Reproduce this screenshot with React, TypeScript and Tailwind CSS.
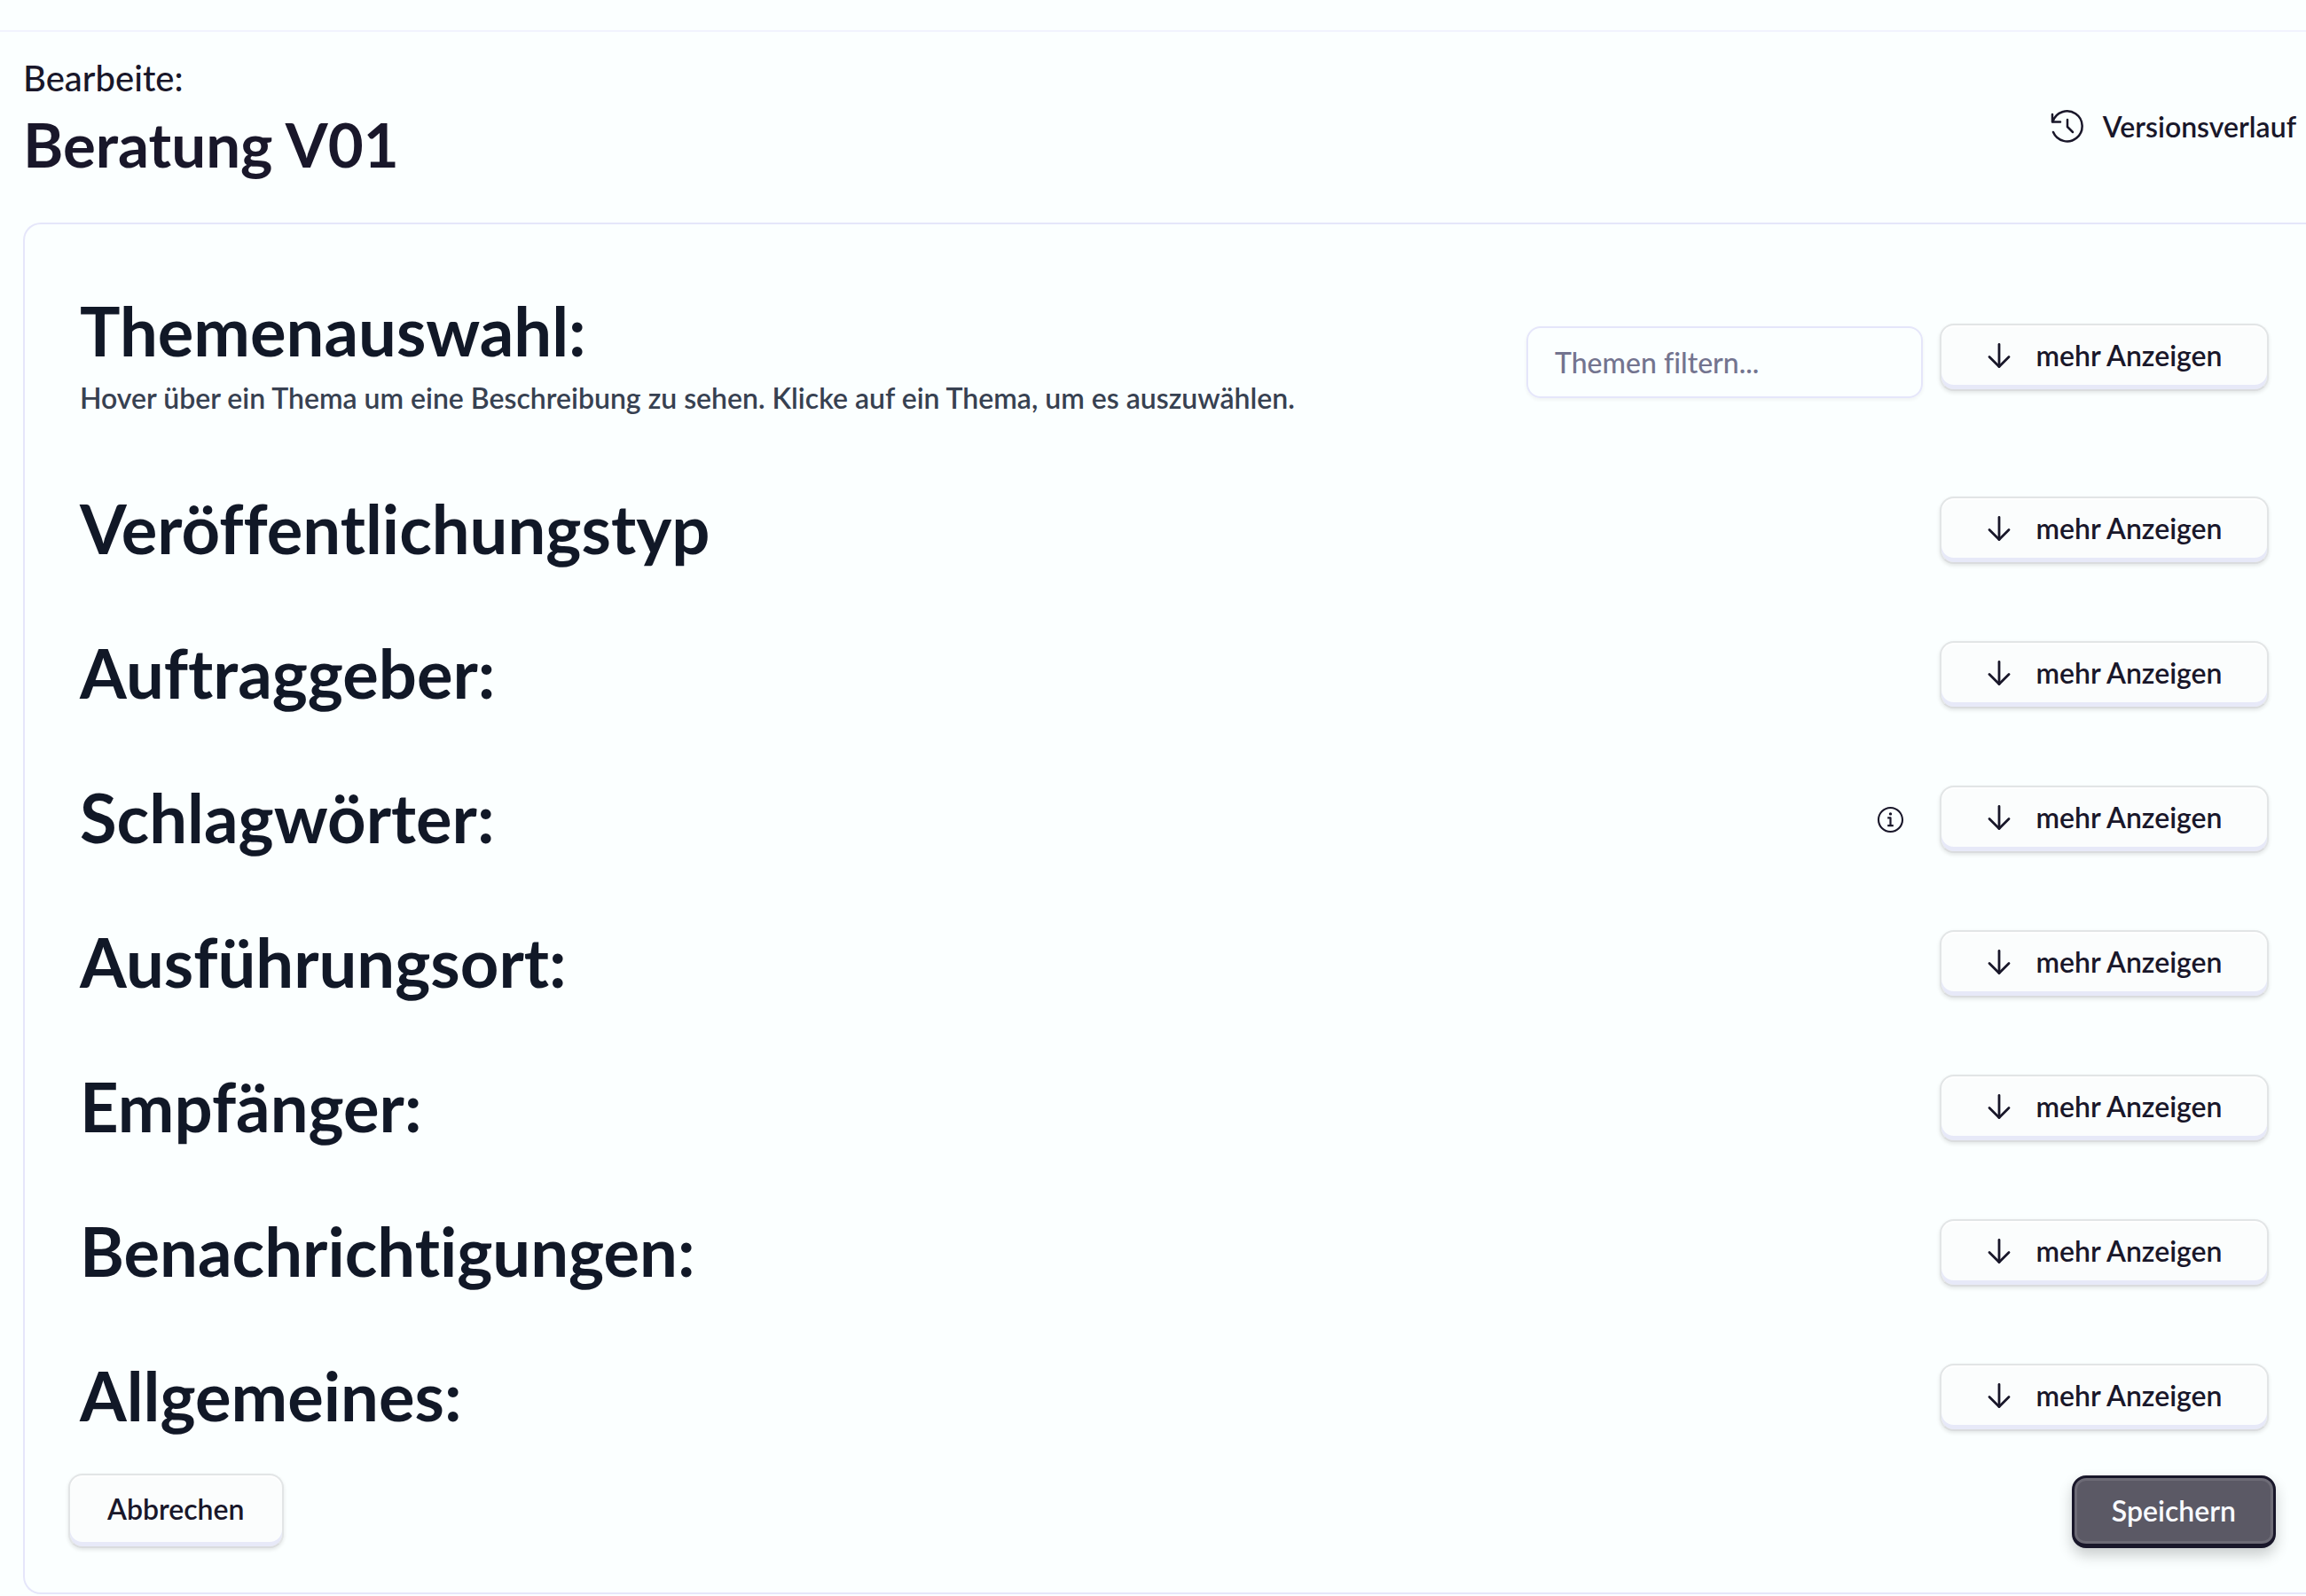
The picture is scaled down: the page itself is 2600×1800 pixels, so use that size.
import { useState } from "react";
import { RxInfoCircled } from "react-icons/rx";

interface Section {
  id: string;
  title: string;
  info?: boolean;
}

const SECTIONS: Section[] = [
  { id: "typ", title: "Veröffentlichungstyp" },
  { id: "auftraggeber", title: "Auftraggeber:" },
  { id: "schlagwoerter", title: "Schlagwörter:", info: true },
  { id: "ort", title: "Ausführungsort:" },
  { id: "empfaenger", title: "Empfänger:" },
  { id: "benachrichtigungen", title: "Benachrichtigungen:" },
  { id: "allgemeines", title: "Allgemeines:" },
];

function HistoryIcon() {
  return (
    <svg viewBox="0 0 40 40" className="size-10 shrink-0" fill="none" stroke="currentColor" strokeWidth="2.5" strokeLinecap="round" strokeLinejoin="round" aria-hidden="true">
      <path d="M3 6v8.5h9" />
      <path d="M3.5 14A17 17 0 1 1 4 26" />
      <path d="M20 12v8l6 6" />
    </svg>
  );
}

function ArrowDownIcon() {
  return (
    <svg viewBox="0 0 32 32" className="size-8 shrink-0" fill="none" stroke="currentColor" strokeWidth="2.8" strokeLinecap="round" strokeLinejoin="round" aria-hidden="true">
      <path d="M15 3.5v25" />
      <path d="M4 17.5 15 28.5l11-11" />
    </svg>
  );
}

function MoreButton() {
  return (
    <button
      type="button"
      className="flex w-[371px] items-center justify-center gap-6 rounded-2xl border-2 border-[#e2e5e6] border-b-[#dadcde] bg-[#fbfdfd] pt-[14px] pb-[18px] text-[32px] leading-10 font-semibold shadow-[inset_0_-5px_0_#e7e9f8,inset_0_2px_1px_#ffffff,0_2px_4px_rgba(0,0,0,0.1)]"
    >
      <ArrowDownIcon />
      mehr Anzeigen
    </button>
  );
}

export default function App() {
  const [filter, setFilter] = useState("");

  return (
    <div className="min-h-screen bg-[#fbffff] font-['Lato',sans-serif] text-[#19172a] [font-variant-ligatures:none]">
      {/* Bottom edge of the navigation bar */}
      <div className="h-9 border-b-2 border-[#f1f3fe]" />

      <header className="flex items-center justify-between pt-[26px] pr-[11px] pl-[26px]">
        <div>
          <p className="text-[40px] leading-[52px] font-medium">Bearbeite:</p>
          <h1 className="text-[69px] leading-[98px] font-bold">Beratung V01</h1>
        </div>
        <button type="button" className="mt-3 flex items-center gap-5 text-[32px] leading-10 font-semibold">
          <HistoryIcon />
          Versionsverlauf
        </button>
      </header>

      <form
        className="mt-[39px] ml-[26px] rounded-l-[20px] border-2 border-r-0 border-[#e5e6fa] pt-20 pr-[34px] pb-[50px] pl-[49px]"
        onSubmit={(e) => e.preventDefault()}
      >
        <div className="flex flex-col gap-[83px] pr-2 pl-[13px] text-[#111827]">
          <section className="flex items-start justify-between pb-1">
            <div>
              <h2 className="text-[76px] leading-[80px] font-bold">Themenauswahl:</h2>
              <p className="mt-4 text-[32px] leading-10 font-semibold text-[#374151]">
                Hover über ein Thema um eine Beschreibung zu sehen. Klicke auf ein Thema, um es auszuwählen.
              </p>
            </div>
            <div className="flex items-start gap-[19px] pt-8 text-[#19172a]">
              <input
                type="text"
                aria-label="Themen filtern"
                value={filter}
                onChange={(e) => setFilter(e.target.value)}
                placeholder="Themen filtern..."
                className="mt-[3px] h-[81px] w-[447px] rounded-2xl border-2 border-[#e5e6fa] px-[30px] text-[32px] leading-10 font-medium shadow-[0_2px_4px_rgba(0,0,0,0.05)] placeholder:text-[#73748f]"
              />
              <MoreButton />
            </div>
          </section>

          {SECTIONS.map((s) => (
            <section key={s.id} className="flex items-end justify-between">
              <h2 className="text-[76px] leading-[80px] font-bold">{s.title}</h2>
              <div className="flex items-center gap-[39px] text-[#19172a]">
                {s.info && (
                  <button type="button" aria-label="Info">
                    <RxInfoCircled className="size-[33px]" />
                  </button>
                )}
                <MoreButton />
              </div>
            </section>
          ))}
        </div>

        <div className="mt-12 flex items-end justify-between text-[32px] leading-10 font-semibold">
          <button
            type="button"
            className="rounded-2xl border-2 border-[#e2e5e6] border-b-[#dadcde] bg-[#fbfdfd] px-[42px] pt-[18px] pb-[22px] shadow-[inset_0_-5px_0_#e7e9f8,inset_0_2px_1px_#ffffff,0_2px_4px_rgba(0,0,0,0.1)]"
          >
            Abbrechen
          </button>
          <button
            type="submit"
            className="rounded-2xl border-3 border-b-5 border-[#19172a] bg-[#5b5965] px-[42px] py-[17px] text-[#f8faff] shadow-[inset_0_0_0_3px_#6d6b76,0_8px_16px_rgba(0,0,0,0.2)]"
          >
            Speichern
          </button>
        </div>
      </form>
    </div>
  );
}
